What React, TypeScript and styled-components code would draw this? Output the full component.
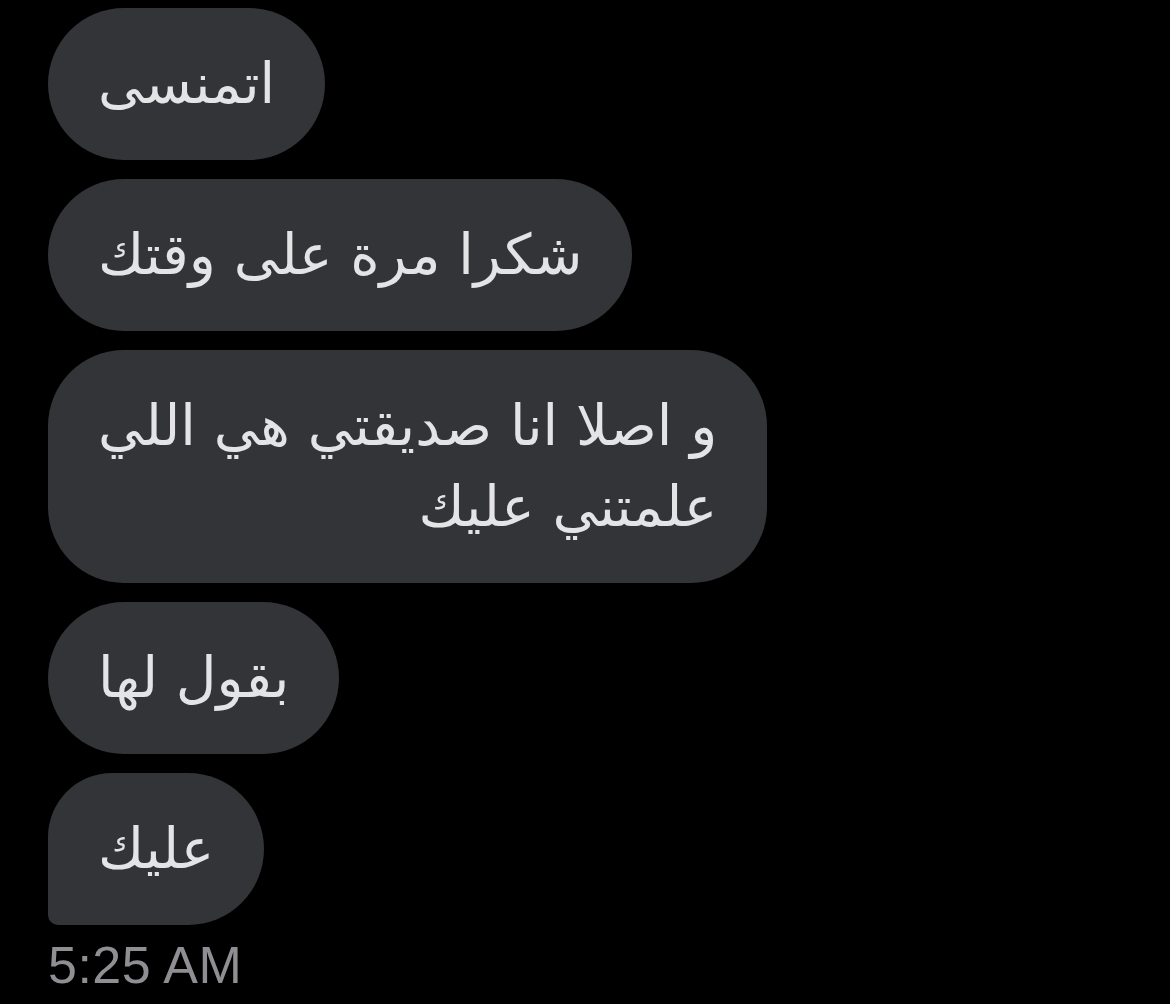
import React from "react";
import styled, { createGlobalStyle } from "styled-components";

const GlobalStyle = createGlobalStyle`
  html, body {
    margin: 0;
    padding: 0;
    background: #000000;
  }
`;

const Thread = styled.div`
  display: flex;
  flex-direction: column;
  align-items: flex-start;
  gap: 19px;
  padding: 8px 0 0 48px;
  min-height: 1004px;
  box-sizing: border-box;
  background: #000000;
`;

const Bubble = styled.div<{ $tail?: boolean }>`
  direction: rtl;
  text-align: right;
  white-space: pre-line;
  box-sizing: border-box;
  min-height: 152px;
  padding: 35px 50px 36px;
  border-radius: ${(p) => (p.$tail ? "64px 76px 76px 10px" : "76px")};
  background: #333438;
  color: #e4e4e6;
  font-family: "DejaVu Sans", "Noto Sans", sans-serif;
  font-size: 56px;
  line-height: 81px;
`;

const Stamp = styled.div`
  margin-top: -9px;
  font-family: "Liberation Sans", Arial, sans-serif;
  font-size: 52px;
  letter-spacing: 0.5px;
  color: #8e8e93;
`;

const messages = [
  "اتمنسى",
  "شكرا مرة على وقتك",
  "و اصلا انا صديقتي هي اللي\nعلمتني عليك",
  "بقول لها",
  "عليك",
];

export default function App() {
  return (
    <>
      <GlobalStyle />
      <Thread>
        {messages.map((text, i) => (
          <Bubble key={i} $tail={i === messages.length - 1}>
            {text}
          </Bubble>
        ))}
        <Stamp>5:25 AM</Stamp>
      </Thread>
    </>
  );
}
